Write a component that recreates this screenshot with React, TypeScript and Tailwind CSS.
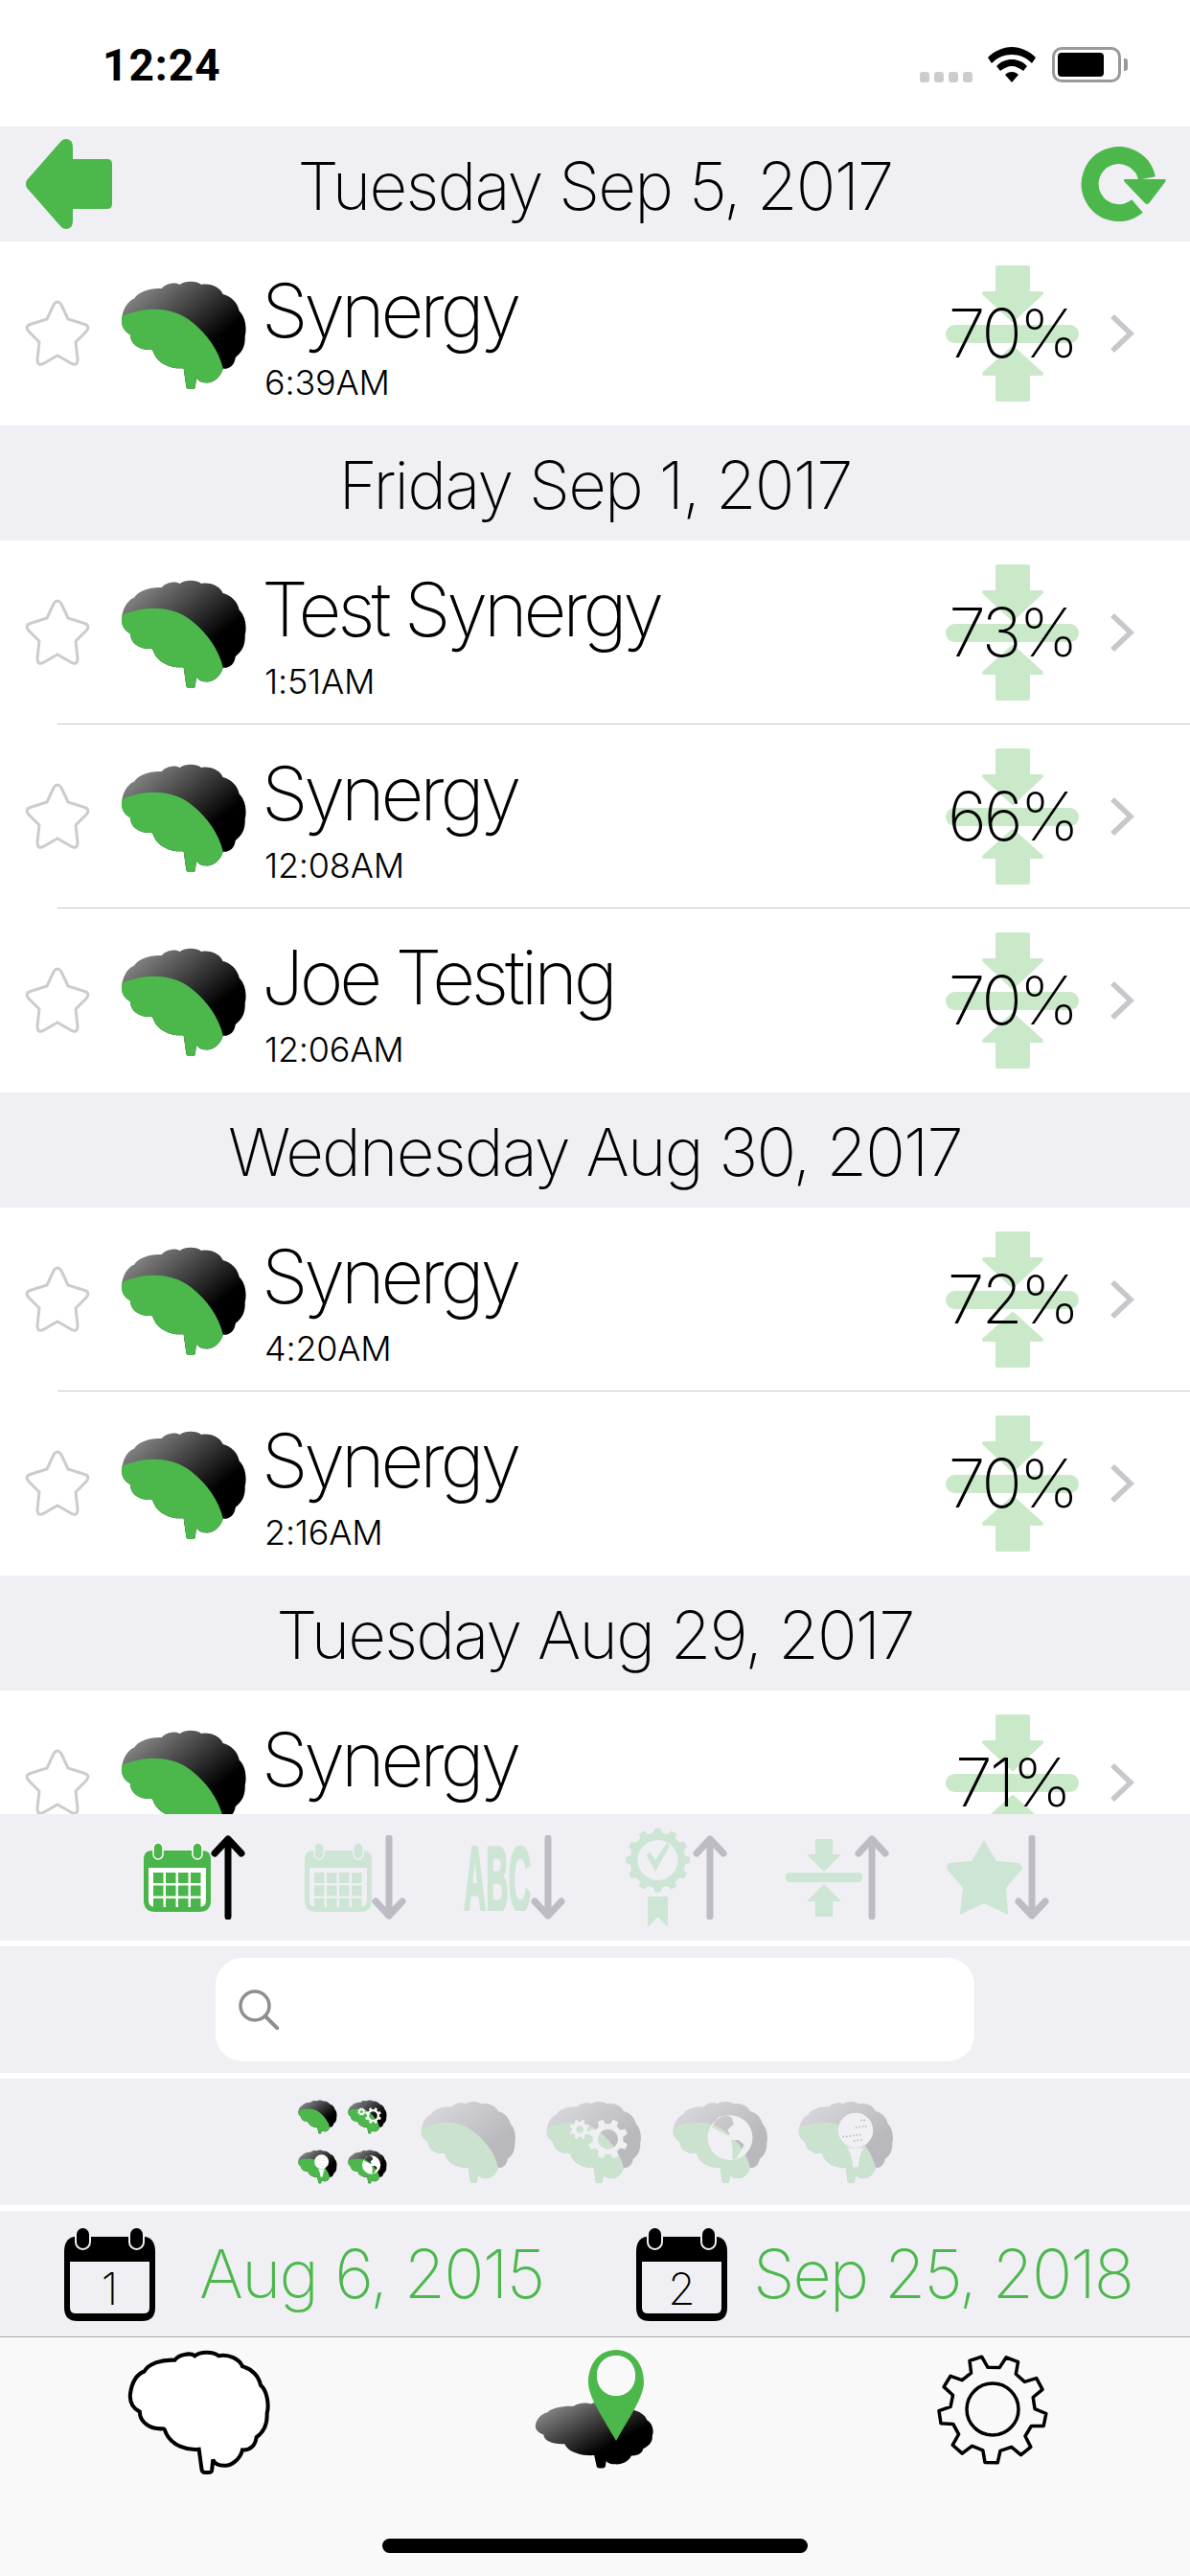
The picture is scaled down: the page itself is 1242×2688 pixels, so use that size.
import type { ReactNode } from "react";

const GREEN = "#4cb84c";
const PALE = "#cde5d4";
const BAR = "#efeff4";

const BRAIN_OUTLINE =
  "M78 190C82 160 95 135 118 126C130 105 165 92 205 94C215 78 250 72 262 82C280 68 315 70 330 82C360 76 390 92 398 112C425 118 445 140 450 165C468 180 475 220 468 245C470 280 455 300 438 312C435 335 420 350 398 348C392 375 365 395 345 392C330 392 318 385 314 375L311 405Q310 412 300 412L292 412Q283 412 282 404L274 346C240 350 195 335 180 300C175 290 178 288 170 288C135 290 105 270 105 240C85 230 76 212 78 190Z";
const BRAIN_GREEN =
  "M78 182C150 150 240 150 300 200C350 240 385 290 399 348C392 375 365 395 345 392C330 392 318 385 314 375L311 405Q310 412 300 412L292 412Q283 412 282 404L274 346C240 350 195 335 180 300C175 290 178 288 170 288C135 290 105 270 105 240C85 230 76 212 78 190Z";

// toothed ring, used for the settings tab and the small brain gears
function gearPath(cx: number, cy: number, outer: number, root: number, teeth: number, rot = 0) {
  const pts: string[] = [];
  for (let i = 0; i < teeth; i++) {
    const step = (Math.PI * 2) / teeth;
    const a = rot + i * step;
    const corners: [number, number][] = [
      [root, a - step * 0.3],
      [outer, a - step * 0.17],
      [outer, a + step * 0.17],
      [root, a + step * 0.3],
    ];
    corners.forEach(([r, t]) => {
      pts.push(`${(cx + r * Math.cos(t)).toFixed(1)} ${(cy + r * Math.sin(t)).toFixed(1)}`);
    });
  }
  return `M${pts.join("L")}Z`;
}

function holePath(cx: number, cy: number, r: number) {
  return `M${cx - r} ${cy}A${r} ${r} 0 1 0 ${cx + r} ${cy}A${r} ${r} 0 1 0 ${cx - r} ${cy}Z`;
}

const GLOBE_LAND =
  "M262 140C285 130 310 130 322 140L330 166L304 190L316 214L300 210L280 200L240 178ZM320 232L350 232L374 252L340 312L324 312L326 270Z";

function Brain({
  className,
  faded,
  overlay,
  stretch,
}: {
  className: string;
  faded?: boolean;
  overlay?: "gear" | "globe" | "golf";
  stretch?: boolean;
}) {
  const knock = faded ? BAR : "#ffffff";
  return (
    <svg viewBox="75 70 400 345" className={className} preserveAspectRatio={stretch ? "none" : undefined}>
      <g opacity={faded ? 0.22 : 1}>
        <path d={BRAIN_OUTLINE} fill="url(#brainShade)" />
        {!stretch && <path d={BRAIN_GREEN} fill={GREEN} />}
      </g>
      {overlay === "gear" && (
        <g fill={knock} fillRule="evenodd">
          <path d={gearPath(333, 229, 84, 64, 8, 0.39) + holePath(333, 229, 42)} />
          <path d={gearPath(215, 188, 42, 32, 8, 0.39) + holePath(215, 188, 15)} />
        </g>
      )}
      {overlay === "globe" && (
        <path d={holePath(315, 223, 94) + GLOBE_LAND} fill={knock} fillRule="evenodd" />
      )}
      {overlay === "golf" && (
        <g>
          <circle cx="315" cy="192" r="73" fill={knock} />
          <path d="M279 266H351Q332 282 326 346H304Q298 282 279 266Z" fill={knock} />
          <g fill="#b9b9bf">
            {[
              [340, 150], [352, 150], [318, 180], [332, 178], [346, 176], [358, 176],
              [264, 218], [278, 218], [292, 216], [306, 214], [320, 212], [334, 210],
              [310, 236], [324, 234], [338, 232],
            ].map(([x, y]) => (
              <circle key={`${x}-${y}`} cx={x} cy={y} r="3.5" />
            ))}
          </g>
        </g>
      )}
    </svg>
  );
}

function Star() {
  return (
    <svg viewBox="0 0 70 72" className="h-[72px] w-[72px] shrink-0" fill="#ffffff" stroke="#cccccc" strokeWidth="3">
      <path d="M31 6Q35 0 39 6L46 21L62 26Q70 28 65 34L54 45L56 63Q56 71 49 67L35 59L21 67Q14 71 14 63L16 45L5 34Q0 28 8 26L24 21Z" />
    </svg>
  );
}

function CompressIcon() {
  return (
    <svg viewBox="0 0 139 142" className="h-[142px] w-[139px]" fill="#c9e9c9">
      <rect x="0" y="62" width="139" height="19" rx="9.5" />
      <path
        d="M54 2H86V29H100L70 57L40 29H54Z"
        stroke="#c9e9c9"
        strokeWidth="4"
        strokeLinejoin="round"
      />
      <path
        d="M54 140H86V113H100L70 86L40 113H54Z"
        stroke="#c9e9c9"
        strokeWidth="4"
        strokeLinejoin="round"
      />
    </svg>
  );
}

function Chevron() {
  return (
    <svg viewBox="0 0 26 40" className="h-[40px] w-[26px]" fill="none" stroke="#c7c7cc" strokeWidth="5.5">
      <path d="M3 2L22 20L3 38" />
    </svg>
  );
}

function SortArrow({ up, black }: { up?: boolean; black?: boolean }) {
  return (
    <svg
      viewBox="0 0 36 88"
      className={up ? "h-[88px] w-[36px] shrink-0" : "h-[88px] w-[36px] shrink-0 rotate-180"}
      fill="none"
      stroke={black ? "#000000" : "#bcbcc2"}
      strokeWidth="7"
      strokeLinecap="round"
      strokeLinejoin="round"
    >
      <path d="M18 4V85M4 19L18 4L32 19" />
    </svg>
  );
}

function SmallCalendar({ color, paper }: { color: string; paper: string }) {
  const cells: ReactNode[] = [];
  for (let r = 0; r < 3; r++) {
    for (let c = 0; c < 4; c++) {
      cells.push(<rect key={`${r}-${c}`} x={10 + c * 13} y={31 + r * 13.5} width="10.5" height="11" />);
    }
  }
  return (
    <svg viewBox="0 0 70 72" className="h-[72px] w-[70px] shrink-0" fill={color}>
      <path d="M8 8H62Q70 8 70 18V60Q70 72 58 72H12Q0 72 0 60V18Q0 8 8 8Z" />
      <rect x="10" y="0" width="10" height="17" rx="5" stroke={paper} strokeWidth="1.5" />
      <rect x="51" y="0" width="10" height="17" rx="5" stroke={paper} strokeWidth="1.5" />
      <path d="M5 26H65V60Q65 67 58 67H12Q5 67 5 60Z" fill={paper} />
      {cells}
    </svg>
  );
}

function DateCalendar({ day }: { day: string }) {
  return (
    <div className="relative h-[98px] w-[95px] shrink-0">
      <svg viewBox="0 0 95 98" className="h-[98px] w-[95px]">
        <path d="M10 10H85Q95 12 95 26V84Q95 98 81 98H14Q0 98 0 84V26Q0 12 10 10Z" fill="#000000" />
        <rect x="12" y="0" width="15" height="23" rx="7.5" fill="#000000" stroke={BAR} strokeWidth="2" />
        <rect x="68" y="0" width="15" height="23" rx="7.5" fill="#000000" stroke={BAR} strokeWidth="2" />
        <path d="M6 36H89V84Q89 90 83 90H12Q6 90 6 84Z" fill={BAR} />
      </svg>
      <span className="absolute inset-x-0 top-[39px] text-center font-['Inter',sans-serif] text-[46px] leading-[50px] font-extralight text-black">
        {day}
      </span>
    </div>
  );
}

type Entry = { name: string; time: string; pct: string };

const sections: { date: string; entries: Entry[] }[] = [
  { date: "Tuesday Sep 5, 2017", entries: [{ name: "Synergy", time: "6:39AM", pct: "70%" }] },
  {
    date: "Friday Sep 1, 2017",
    entries: [
      { name: "Test Synergy", time: "1:51AM", pct: "73%" },
      { name: "Synergy", time: "12:08AM", pct: "66%" },
      { name: "Joe Testing", time: "12:06AM", pct: "70%" },
    ],
  },
  {
    date: "Wednesday Aug 30, 2017",
    entries: [
      { name: "Synergy", time: "4:20AM", pct: "72%" },
      { name: "Synergy", time: "2:16AM", pct: "70%" },
    ],
  },
  // the time of this last row sits below the fold
  { date: "Tuesday Aug 29, 2017", entries: [{ name: "Synergy", time: "", pct: "71%" }] },
];

function Row({ entry, last }: { entry: Entry; last: boolean }) {
  return (
    <div className="bg-white">
      <div className="flex h-[191px] items-center pl-[24px]">
        <Star />
        <Brain className="ml-[30px] h-[114px] w-[132px] shrink-0 translate-y-[2px]" />
        <div className="ml-[15px] flex flex-1 flex-col pt-[6px]">
          <span className="text-[78px] leading-[88px] font-extralight tracking-[-4.2px] text-black">{entry.name}</span>
          <span className="mt-[9px] h-[44px] pl-[3px] text-[36px] leading-[44px] font-light tracking-[-0.2px] text-black">{entry.time}</span>
        </div>
        <div className="relative flex h-[142px] w-[139px] shrink-0 items-center justify-center">
          <CompressIcon />
          <span className="absolute inset-0 flex items-center justify-center text-[70px] font-extralight tracking-[-3px] text-black">
            {entry.pct}
          </span>
        </div>
        <div className="ml-[32px] w-[84px] shrink-0">
          <Chevron />
        </div>
      </div>
      <div className={last ? "h-px" : "ml-[60px] h-px bg-[#c8c7cc]"} />
    </div>
  );
}

export default function App() {
  return (
    <div className="flex h-[2688px] w-[1242px] flex-col overflow-hidden bg-white font-['Inter',sans-serif]">
      <svg className="absolute h-0 w-0">
        <defs>
          <linearGradient id="brainShade" x1="0.08" y1="0" x2="0.68" y2="0.62">
            <stop offset="0" stopColor="#959595" />
            <stop offset="1" stopColor="#000000" />
          </linearGradient>
        </defs>
      </svg>

      {/* status bar */}
      <div className="flex h-[132px] shrink-0 items-start justify-between pt-[41px] pr-[72px] pl-[107px]">
        <span className="font-['Roboto',sans-serif] text-[46px] leading-[54px] font-bold tracking-[1px] text-black">12:24</span>
        <div className="flex items-center pt-[8px]">
          <div className="mt-[26px] flex gap-[5px]">
            <div className="h-[11px] w-[10px] rounded-[3px] bg-[#cccccc]" />
            <div className="h-[11px] w-[10px] rounded-[3px] bg-[#cccccc]" />
            <div className="h-[11px] w-[10px] rounded-[3px] bg-[#cccccc]" />
            <div className="h-[11px] w-[10px] rounded-[3px] bg-[#cccccc]" />
          </div>
          <svg viewBox="0 0 50 37" className="ml-[16px] h-[37px] w-[50px]" fill="#000000">
            <path d="M25 0C34 0 43 4 50 11L46 17C40 11 33 8 25 8C17 8 10 11 4 17L0 11C7 4 16 0 25 0Z" />
            <path d="M25 13C31 13 36 15 41 20L37 25C33 22 29 20 25 20C21 20 17 22 13 25L9 20C14 15 19 13 25 13Z" />
            <path d="M25 26C28 26 30 27 32 29L25 37L18 29C20 27 22 26 25 26Z" />
          </svg>
          <div className="relative ml-[17px] h-[37px] w-[72px] rounded-[10px] border-[3px] border-[#999999] p-[3px]">
            <div className="h-[25px] w-[48px] rounded-[4px] bg-black" />
            <div className="absolute top-[9px] -right-[10px] h-[13px] w-[4px] rounded-r-[3px] bg-[#999999]" />
          </div>
        </div>
      </div>

      {/* date header with back and refresh */}
      <div className="flex min-h-0 flex-1 flex-col overflow-hidden">
        {sections.map((section, i) => (
          <div key={section.date}>
            <div className="flex h-[120px] items-center bg-[#efeff4]">
              <div className="w-[117px] shrink-0 pl-[27px]">
                {i === 0 && (
                  <svg viewBox="0 0 90 94" className="h-[94px] w-[90px]" fill={GREEN}>
                    <path d="M1 43L37 2Q42 -2 47 2Q49 4 49 10V21H85Q90 21 90 26V68Q90 73 85 73H49V84Q49 90 47 92Q42 96 37 92L1 51Q-1 47 1 43Z" />
                  </svg>
                )}
              </div>
              <span className="flex-1 pt-[4px] text-center text-[69px] leading-[80px] font-extralight tracking-[-1.8px] text-black">
                {section.date}
              </span>
              <div className="flex w-[117px] shrink-0 justify-end pr-[25px]">
                {i === 0 && (
                  <svg viewBox="0 0 89 78" className="h-[78px] w-[89px]" fill="none">
                    <path d="M69 33A30 30 0 1 0 59 62" stroke={GREEN} strokeWidth="18" />
                    <path d="M46 34H87Q90 34 88 37L72 58Q69 62 66 58L46 37Q44 34 46 34Z" fill={GREEN} />
                  </svg>
                )}
              </div>
            </div>
            {section.entries.map((entry, j) => (
              <Row key={j} entry={entry} last={j === section.entries.length - 1} />
            ))}
          </div>
        ))}
      </div>

      {/* filter bars */}
      <div className="flex shrink-0 flex-col gap-[6px] bg-white">
        <div className="flex h-[132px] items-center bg-[#efeff4] pl-[150px]">
          <div className="flex w-[168px] items-center">
            <SmallCalendar color="#4ab54a" paper="#ffffff" />
            <SortArrow up black />
          </div>
          <div className="flex w-[166px] items-center">
            <SmallCalendar color={PALE} paper={BAR} />
            <SortArrow />
          </div>
          <div className="flex w-[169px] items-center">
            <svg viewBox="0 0 70 70" className="h-[70px] w-[70px] shrink-0">
              <text
                x="0"
                y="70"
                textLength="70"
                lengthAdjust="spacingAndGlyphs"
                fontFamily="Liberation Sans"
                fontWeight="700"
                fontSize="96"
                fill={PALE}
                stroke={PALE}
                strokeWidth="3"
              >
                ABC
              </text>
            </svg>
            <SortArrow />
          </div>
          <div className="flex w-[167px] items-center">
            <svg viewBox="0 0 67 103" className="h-[103px] w-[67px] shrink-0" fill={PALE}>
              <path fillRule="evenodd" d={gearPath(33.5, 33, 33.5, 29, 12) + holePath(33.5, 33, 21)} />
              <path d="M25 24L31 33L43 15L46 18L31 45L22 28Z" />
              <path d="M23 71H44V103L33.5 92L23 103Z" />
            </svg>
            <div className="ml-[3px]">
              <SortArrow up />
            </div>
          </div>
          <div className="flex w-[167px] items-center">
            <svg viewBox="0 0 80 81" className="h-[81px] w-[80px] shrink-0" fill={PALE}>
              <rect x="0" y="35" width="80" height="10" rx="4" />
              <path d="M31 0H49V16H58L40 34L22 16H31Z" />
              <path d="M31 81H49V65H58L40 47L22 65H31Z" />
            </svg>
            <div className="-ml-[8px]">
              <SortArrow up />
            </div>
          </div>
          <div className="flex items-center">
            <svg viewBox="0 0 80 78" className="h-[78px] w-[80px] shrink-0" fill={PALE}>
              <path d="M40 0L53 22L76 24Q80 26 80 30L63 50L65 76Q64 79 61 76L40 66L19 76Q16 79 15 76L18 50L1 30Q0 26 4 24L27 22Z" />
            </svg>
            <div className="-ml-[8px]">
              <SortArrow />
            </div>
          </div>
        </div>

        <div className="flex h-[132px] items-center bg-[#efeff4] pl-[225px]">
          <div className="flex h-[108px] w-[792px] items-center rounded-[28px] bg-white pl-[24px]">
            <svg viewBox="0 0 42 42" className="h-[42px] w-[42px]" fill="none" stroke="#8e8e93" strokeWidth="3.5">
              <circle cx="17" cy="17" r="15" />
              <path d="M28 28L41 41" strokeLinecap="round" strokeWidth="4" />
            </svg>
          </div>
        </div>

        <div className="flex h-[132px] items-center bg-[#efeff4] pl-[311px]">
          <div className="grid grid-cols-[41px_41px] gap-x-[11px] gap-y-[16px]">
            <Brain className="h-[36px] w-[41px]" />
            <Brain className="h-[36px] w-[41px]" overlay="gear" />
            <Brain className="h-[36px] w-[41px]" overlay="golf" />
            <Brain className="h-[36px] w-[41px]" overlay="globe" />
          </div>
          <Brain className="ml-[35px] h-[87px] w-[100px]" faded />
          <Brain className="ml-[31px] h-[87px] w-[100px]" faded overlay="gear" />
          <Brain className="ml-[32px] h-[87px] w-[100px]" faded overlay="globe" />
          <Brain className="ml-[31px] h-[87px] w-[100px]" faded overlay="golf" />
        </div>

        <div className="flex h-[131px] items-center bg-[#efeff4] pl-[67px]">
          <DateCalendar day="1" />
          <span className="ml-[46px] w-[456px] text-[70px] leading-[80px] font-extralight tracking-[-1.7px] text-[#4cb84c]">
            Aug 6, 2015
          </span>
          <DateCalendar day="2" />
          <span className="ml-[27px] text-[70px] leading-[80px] font-extralight tracking-[-2px] text-[#4cb84c]">
            Sep 25, 2018
          </span>
        </div>
      </div>

      {/* tab bar */}
      <div className="relative h-[250px] shrink-0 border-t border-[#a9a9a9] bg-[#f9f9f9]">
        <div className="flex items-start pt-[13px]">
          <svg viewBox="70 65 410 355" className="ml-[133px] h-[131px] w-[150px]" preserveAspectRatio="none" fill="#ffffff" stroke="#000000" strokeWidth="11">
            <path d={BRAIN_OUTLINE} />
          </svg>
          <div className="relative ml-[275px] h-[130px] w-[125px]">
            <Brain className="absolute top-[54px] left-0 h-[70px] w-[125px]" stretch />
            <svg viewBox="0 0 58 95" className="absolute top-0 left-[56px] h-[95px] w-[58px]" fill={GREEN}>
              <path
                fillRule="evenodd"
                d="M29 0C46 0 58 14 58 34C58 50 40 75 29 95C18 75 0 50 0 34C0 14 12 0 29 0ZM29 6C17 6 9 15 9 27C9 39 17 48 29 48C41 48 49 39 49 27C49 15 41 6 29 6Z"
              />
              <ellipse cx="29" cy="27" rx="20" ry="21" fill="#f9f9f9" />
            </svg>
          </div>
          <svg viewBox="0 0 116 116" className="mt-[4px] ml-[295px] h-[116px] w-[116px]" fill="#f9f9f9" stroke="#000000" strokeWidth="3.5" strokeLinejoin="round">
            <path d={gearPath(58, 58, 56, 44, 9, 0.2)} />
            <ellipse cx="58" cy="58" rx="27" ry="27" />
          </svg>
        </div>
        <div className="absolute top-[210px] left-[399px] h-[15px] w-[444px] rounded-full bg-black" />
      </div>
    </div>
  );
}
